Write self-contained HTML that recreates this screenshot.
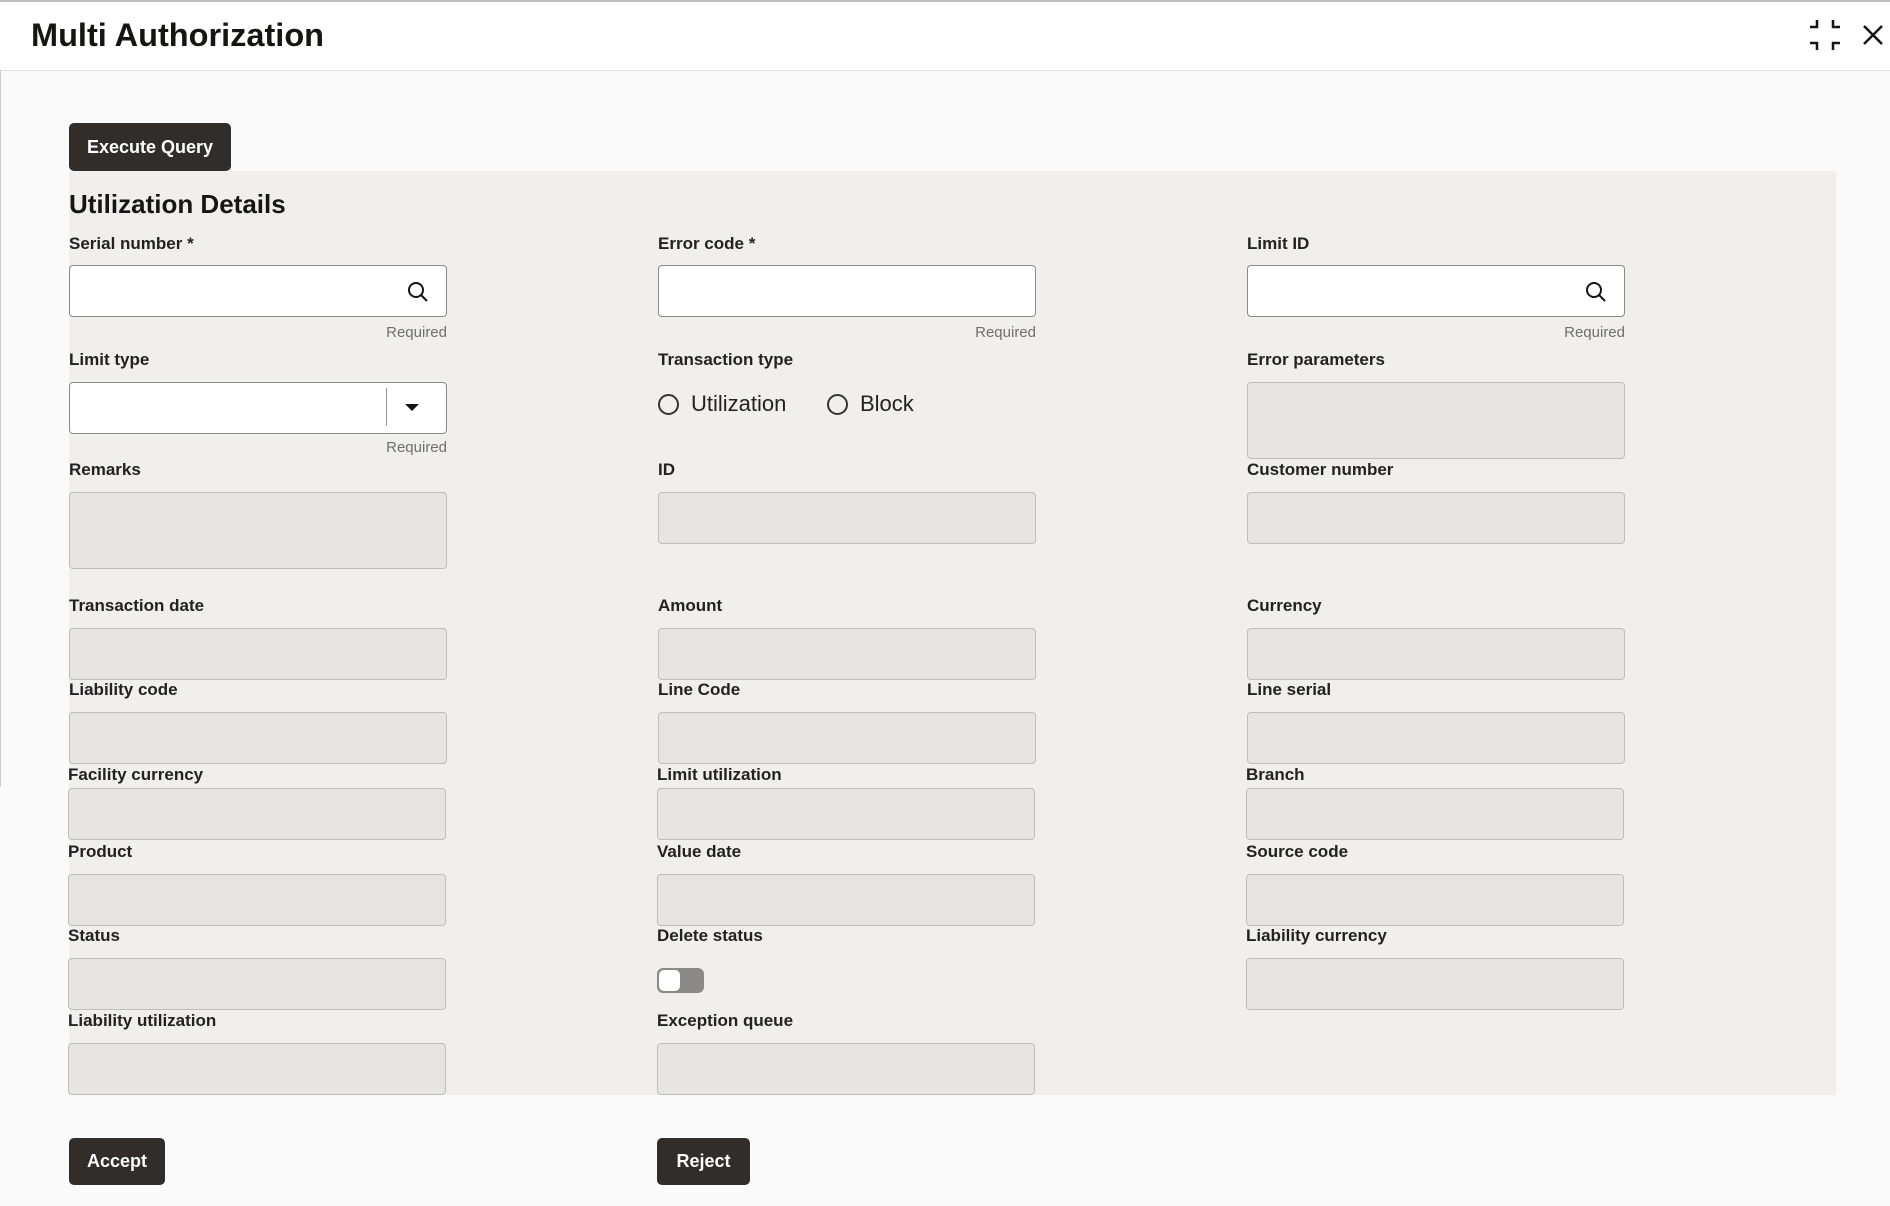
<!DOCTYPE html>
<html><head><meta charset="utf-8"><style>
*{box-sizing:border-box;margin:0;padding:0}
body{width:1890px;height:1206px;background:#fafafa;font-family:"Liberation Sans",sans-serif;position:relative;overflow:hidden;color:#161513}
.hdr{position:absolute;left:0;top:0;width:1890px;height:71px;background:#fff;border-top:2px solid #bbb;border-bottom:1px solid #e2e2e2}
.lb{position:absolute;left:0;top:70px;width:1px;height:717px;background:#ccc}
.title{position:absolute;left:31px;top:17px;font-size:32.5px;font-weight:bold;color:#161513}
.panel{position:absolute;left:69px;top:171px;width:1767px;height:924px;background:#f0efee}
.btn{position:absolute;background:#312d2a;color:#fff;font-weight:bold;font-size:18px;border-radius:5px;display:flex;align-items:center;justify-content:center}
.h2{position:absolute;left:69px;top:189px;font-size:26px;font-weight:bold}
.l{position:absolute;font-size:17px;font-weight:bold;color:#222;margin-top:1px}
.i{position:absolute;width:378px;height:52px;border:1px solid #bdbdbd;border-radius:4px;background:#e6e5e4}
.w{background:#fff;border-color:#8a8a8a}
.r{position:absolute;font-size:15px;color:#6f6f6f;width:378px;text-align:right;margin-top:1px}
.rad{position:absolute;font-size:22px;color:#222;display:flex;align-items:center}
.rad span{display:inline-block;width:21px;height:21px;border:2px solid #333;border-radius:50%;margin-right:12px}
</style></head><body>
<div class="hdr"></div><div class="lb"></div>
<div class="title">Multi Authorization</div>
<svg style="position:absolute;left:1808px;top:18px" width="34" height="34" viewBox="0 0 34 34" fill="none" stroke="#161513" stroke-width="2.5"><path d="M9 2V9H2M25 2V9H32M9 32V25H2M25 32V25H32"/></svg>
<svg style="position:absolute;left:1862px;top:24px" width="22" height="22" viewBox="0 0 22 22" stroke="#161513" stroke-width="2.6"><path d="M2 2L20 20M20 2L2 20"/></svg>
<div class="btn" style="left:69px;top:123px;width:162px;height:48px">Execute Query</div>
<div class="panel"></div>
<div class="h2">Utilization Details</div>

<div class="l" style="left:69px;top:233px">Serial number *</div>
<div class="i w" style="left:69px;top:265px"></div>
<svg style="position:absolute;left:406px;top:280px" width="24" height="24" viewBox="0 0 24 24" fill="none" stroke="#161513" stroke-width="2"><circle cx="10" cy="10" r="7"/><path d="M15 15L21 21"/></svg>
<div class="r" style="left:69px;top:323px">Required</div>
<div class="l" style="left:658px;top:233px">Error code *</div>
<div class="i w" style="left:658px;top:265px"></div>
<div class="r" style="left:658px;top:323px">Required</div>
<div class="l" style="left:1247px;top:233px">Limit ID</div>
<div class="i w" style="left:1247px;top:265px"></div>
<svg style="position:absolute;left:1584px;top:280px" width="24" height="24" viewBox="0 0 24 24" fill="none" stroke="#161513" stroke-width="2"><circle cx="10" cy="10" r="7"/><path d="M15 15L21 21"/></svg>
<div class="r" style="left:1247px;top:323px">Required</div>

<div class="l" style="left:69px;top:349px">Limit type</div>
<div class="i w" style="left:69px;top:382px"></div>
<div style="position:absolute;left:386px;top:388px;width:1px;height:38px;background:#999"></div>
<div style="position:absolute;left:405px;top:404px;border-left:7px solid transparent;border-right:7px solid transparent;border-top:7px solid #161513"></div>
<div class="r" style="left:69px;top:438px">Required</div>
<div class="l" style="left:658px;top:349px">Transaction type</div>
<div class="rad" style="left:658px;top:391px"><span></span>Utilization</div>
<div class="rad" style="left:827px;top:391px"><span></span>Block</div>
<div class="l" style="left:1247px;top:349px">Error parameters</div>
<div class="i" style="left:1247px;top:382px;height:77px"></div>

<div class="l" style="left:69px;top:459px">Remarks</div>
<div class="i" style="left:69px;top:492px;height:77px"></div>
<div class="l" style="left:658px;top:459px">ID</div>
<div class="i" style="left:658px;top:492px"></div>
<div class="l" style="left:1247px;top:459px">Customer number</div>
<div class="i" style="left:1247px;top:492px"></div>

<div class="l" style="left:69px;top:595px">Transaction date</div>
<div class="i" style="left:69px;top:628px"></div>
<div class="l" style="left:658px;top:595px">Amount</div>
<div class="i" style="left:658px;top:628px"></div>
<div class="l" style="left:1247px;top:595px">Currency</div>
<div class="i" style="left:1247px;top:628px"></div>

<div class="l" style="left:69px;top:679px">Liability code</div>
<div class="i" style="left:69px;top:712px"></div>
<div class="l" style="left:658px;top:679px">Line Code</div>
<div class="i" style="left:658px;top:712px"></div>
<div class="l" style="left:1247px;top:679px">Line serial</div>
<div class="i" style="left:1247px;top:712px"></div>

<div class="l" style="left:68px;top:764px">Facility currency</div>
<div class="i" style="left:68px;top:788px"></div>
<div class="l" style="left:657px;top:764px">Limit utilization</div>
<div class="i" style="left:657px;top:788px"></div>
<div class="l" style="left:1246px;top:764px">Branch</div>
<div class="i" style="left:1246px;top:788px"></div>

<div class="l" style="left:68px;top:841px">Product</div>
<div class="i" style="left:68px;top:874px"></div>
<div class="l" style="left:657px;top:841px">Value date</div>
<div class="i" style="left:657px;top:874px"></div>
<div class="l" style="left:1246px;top:841px">Source code</div>
<div class="i" style="left:1246px;top:874px"></div>

<div class="l" style="left:68px;top:925px">Status</div>
<div class="i" style="left:68px;top:958px"></div>
<div class="l" style="left:657px;top:925px">Delete status</div>
<div style="position:absolute;left:657px;top:968px;width:47px;height:25px;border-radius:6px;background:#8c8a88;border:2px solid #8c8a88"><div style="width:21px;height:21px;background:#fff;border-radius:5px"></div></div>
<div class="l" style="left:1246px;top:925px">Liability currency</div>
<div class="i" style="left:1246px;top:958px"></div>

<div class="l" style="left:68px;top:1010px">Liability utilization</div>
<div class="i" style="left:68px;top:1043px"></div>
<div class="l" style="left:657px;top:1010px">Exception queue</div>
<div class="i" style="left:657px;top:1043px"></div>

<div class="btn" style="left:69px;top:1138px;width:96px;height:47px">Accept</div>
<div class="btn" style="left:657px;top:1138px;width:93px;height:47px">Reject</div>
</body></html>
